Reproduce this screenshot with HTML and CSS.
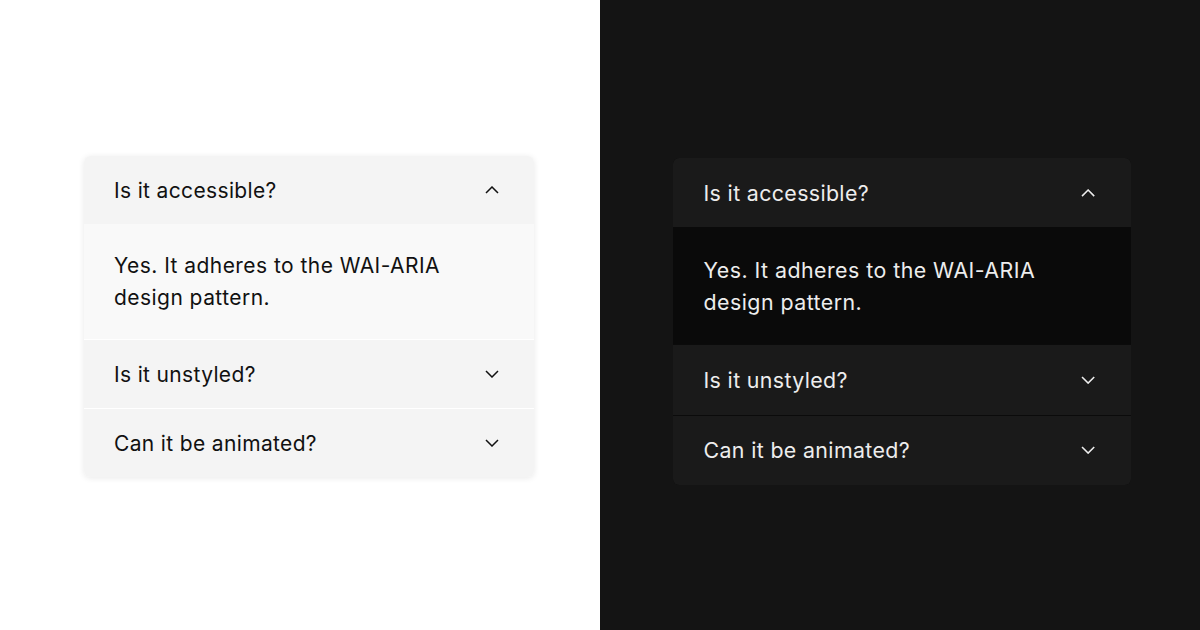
FILE: index.html
```html
<!DOCTYPE html>
<html lang="en">
<head>
<meta charset="utf-8">
<title>Accordion</title>
<link rel="stylesheet" href="styles.css">
</head>
<body>
<main class="split">
  <section class="panel panel-light">
    <div class="accordion">
      <div class="item">
        <div class="trigger">
          <span>Is it accessible?</span>
          <svg class="chevron" width="14" height="8" viewBox="0 0 14 8"><polyline points="1,7 7,1 13,7"/></svg>
        </div>
        <div class="content">Yes. It adheres to the WAI-ARIA<br>design pattern.</div>
      </div>
      <div class="item">
        <div class="trigger">
          <span>Is it unstyled?</span>
          <svg class="chevron" width="14" height="8" viewBox="0 0 14 8"><polyline points="1,1 7,7 13,1"/></svg>
        </div>
      </div>
      <div class="item">
        <div class="trigger">
          <span>Can it be animated?</span>
          <svg class="chevron" width="14" height="8" viewBox="0 0 14 8"><polyline points="1,1 7,7 13,1"/></svg>
        </div>
      </div>
    </div>
  </section>
  <section class="panel panel-dark">
    <div class="accordion">
      <div class="item">
        <div class="trigger">
          <span>Is it accessible?</span>
          <svg class="chevron" width="14" height="8" viewBox="0 0 14 8"><polyline points="1,7 7,1 13,7"/></svg>
        </div>
        <div class="content">Yes. It adheres to the WAI-ARIA<br>design pattern.</div>
      </div>
      <div class="item">
        <div class="trigger">
          <span>Is it unstyled?</span>
          <svg class="chevron" width="14" height="8" viewBox="0 0 14 8"><polyline points="1,1 7,7 13,1"/></svg>
        </div>
      </div>
      <div class="item">
        <div class="trigger">
          <span>Can it be animated?</span>
          <svg class="chevron" width="14" height="8" viewBox="0 0 14 8"><polyline points="1,1 7,7 13,1"/></svg>
        </div>
      </div>
    </div>
  </section>
</main>
</body>
</html>
```

FILE: styles.css
```css
* { box-sizing: border-box; }
html, body { margin: 0; padding: 0; }
body {
  width: 1200px;
  height: 630px;
  overflow: hidden;
  font-family: Inter, "Noto Sans", sans-serif;
}
.split {
  display: flex;
  width: 1200px;
  height: 630px;
}
.panel {
  width: 600px;
  height: 630px;
}
.panel-light {
  background: #ffffff;
  color: #111111;
  padding: 156px 0 0 84px;
}
.panel-dark {
  background: #141414;
  color: #ededed;
  padding: 158px 0 0 73px;
}
.accordion {
  width: 450px;
  border-radius: 6px;
  overflow: hidden;
  display: flex;
  flex-direction: column;
  gap: 1px;
}
.panel-light .accordion {
  background: #ffffff;
  box-shadow: 0 1px 6px rgba(0, 0, 0, 0.09);
}
.panel-dark .accordion {
  background: #0b0b0b;
  zoom: 1.018;
}
.trigger {
  height: 68px;
  display: flex;
  align-items: center;
  justify-content: space-between;
  padding: 0 35px 0 30px;
  font-size: 21px;
  letter-spacing: 0.35px;
}
.panel-light .trigger { background: #f4f4f4; }
.panel-dark .trigger { background: #1a1a1a; }
.content {
  font-size: 21px;
  line-height: 32px;
  padding: 26px 30px 25px 30px;
  letter-spacing: 0.45px;
}
.panel-light .content { background: #f9f9f9; }
.panel-dark .content { background: #0a0a0a; }
.chevron {
  display: block;
  fill: none;
  stroke: currentColor;
  stroke-width: 1.5;
}
```
